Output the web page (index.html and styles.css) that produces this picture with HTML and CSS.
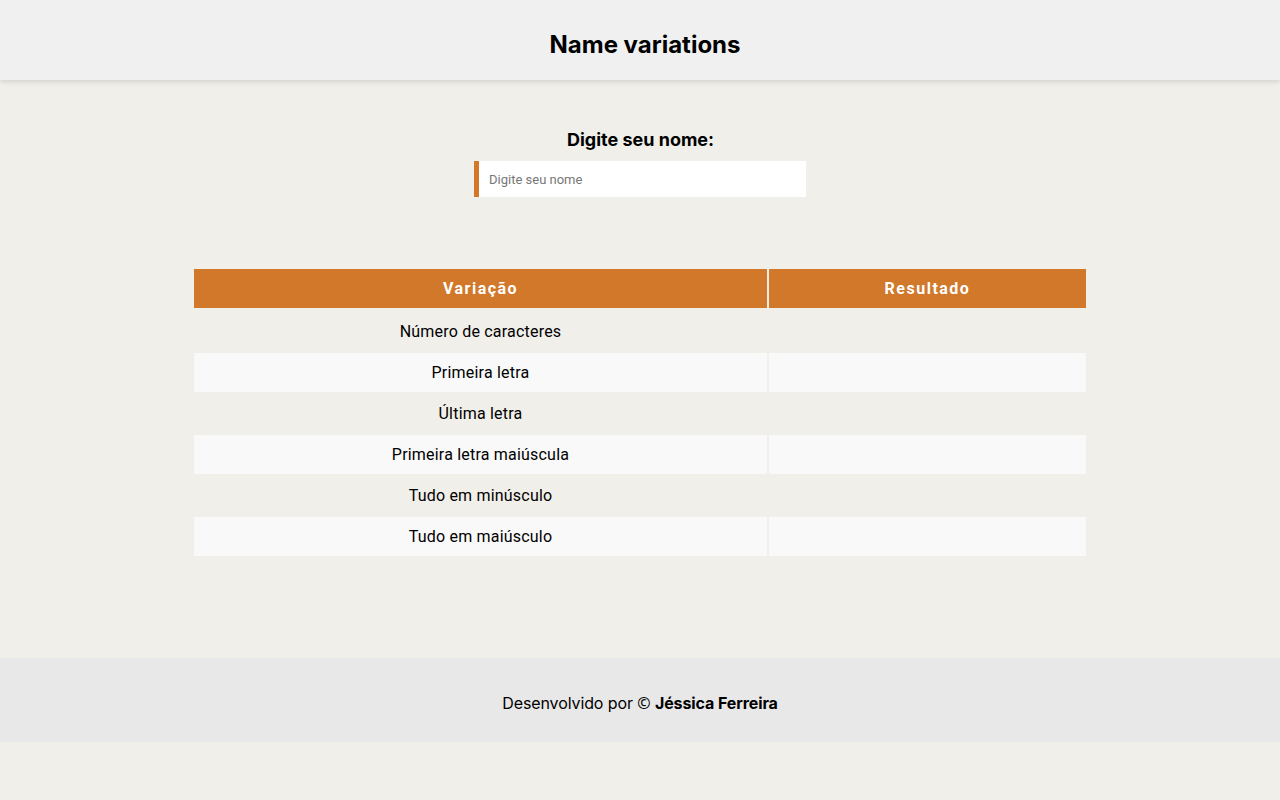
FILE: index.html
```html
<!DOCTYPE html>
<html lang="pt-BR">
<head>
<meta charset="utf-8">
<title>Name variations</title>
<link rel="stylesheet" href="styles.css">
</head>
<body>
<header class="topbar">
  <h1 class="title">Name variations</h1>
</header>
<main class="content">
  <form class="name-form">
    <label class="name-label" for="nome">Digite seu nome:</label>
    <input class="name-input" id="nome" type="text" placeholder="Digite seu nome">
  </form>
  <table class="variations">
    <thead>
      <tr><th class="col-var">Variação</th><th class="col-res">Resultado</th></tr>
    </thead>
    <tbody>
      <tr><td>Número de caracteres</td><td></td></tr>
      <tr><td>Primeira letra</td><td></td></tr>
      <tr><td>Última letra</td><td></td></tr>
      <tr><td>Primeira letra maiúscula</td><td></td></tr>
      <tr><td>Tudo em minúsculo</td><td></td></tr>
      <tr><td>Tudo em maiúsculo</td><td></td></tr>
    </tbody>
  </table>
</main>
<footer class="footer">
  <p class="credit">Desenvolvido por <span class="copy">©</span> <strong>Jéssica Ferreira</strong></p>
</footer>
</body>
</html>
```

FILE: styles.css
```css
* { box-sizing: border-box; }

body {
  margin: 0;
  background: #f0efea;
  font-family: Inter, "Noto Sans", sans-serif;
  color: #000;
}

.topbar {
  height: 80px;
  background: #f0f0f0;
  box-shadow: 0 2px 5px rgba(0, 0, 0, 0.12);
  display: flex;
  align-items: center;
  justify-content: center;
  position: relative;
  z-index: 1;
}

.title {
  margin: 0;
  font-size: 24px;
  font-weight: 700;
  line-height: 30px;
  padding-top: 10px;
  padding-left: 10px;
}

.content {
  padding-top: 49px;
  padding-bottom: 100px;
}

.name-form {
  display: flex;
  flex-direction: column;
  align-items: center;
  gap: 10px;
}

.name-label {
  font-size: 18px;
  font-weight: 700;
  line-height: 22px;
  padding-left: 1px;
}

.name-input {
  width: 332px;
  height: 36px;
  border: none;
  border-left: 5px solid #d2782a;
  background: #fff;
  padding: 0 10px;
  font-family: Roboto, sans-serif;
  font-size: 13px;
  color: #333;
  outline: none;
}

.name-input::placeholder {
  color: #777;
}

.variations {
  width: 70%;
  margin: 70px auto 0;
  border-collapse: separate;
  border-spacing: 2px;
  font-family: Roboto, sans-serif;
  font-size: 16px;
}

.variations th {
  height: 41px;
  background: #d2782a;
  background-clip: padding-box;
  border-bottom: 2px solid transparent;
  color: #fff;
  font-weight: 700;
  letter-spacing: 1.5px;
  padding: 0;
  vertical-align: middle;
}

.col-var { width: 573px; }

.variations td {
  height: 39px;
  padding: 0;
  text-align: center;
  vertical-align: middle;
  letter-spacing: 0.2px;
}

.variations tbody tr:nth-child(even) td {
  background: #f9f9f9;
}

.footer {
  height: 84px;
  background: #e8e8e8;
  display: flex;
  align-items: center;
  justify-content: center;
}

.credit {
  margin: 0;
  font-size: 16px;
  padding-top: 6px;
  letter-spacing: -0.1px;
}

.copy {
  font-family: "Noto Sans", sans-serif;
  font-weight: 400;
}

.credit strong { font-weight: 700; }
```
